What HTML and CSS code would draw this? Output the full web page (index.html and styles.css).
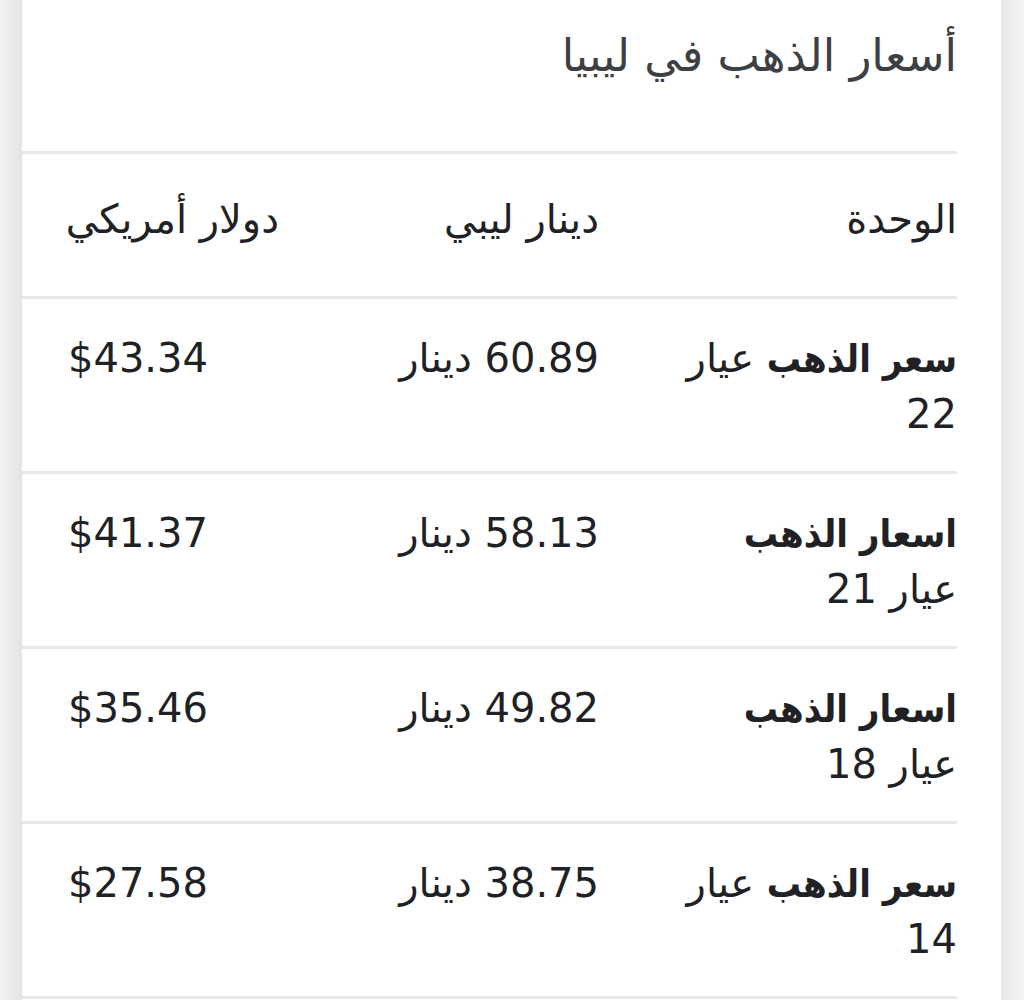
FILE: index.html
```html
<!DOCTYPE html>
<html lang="ar" dir="rtl">
<head>
<meta charset="utf-8">
<title>أسعار الذهب في ليبيا</title>
<link rel="stylesheet" href="styles.css">
</head>
<body>
<div class="page">
  <div class="card">
    <h1 class="title">أسعار الذهب في ليبيا</h1>
    <div class="table">
      <div class="row head">
        <div class="cell c1">الوحدة</div>
        <div class="cell c2">دينار ليبي</div>
        <div class="cell c3">دولار أمريكي</div>
      </div>
      <div class="row">
        <div class="cell c1"><b>سعر الذهب</b> عيار<br>22</div>
        <div class="cell c2">60.89 دينار</div>
        <div class="cell c3">$43.34</div>
      </div>
      <div class="row">
        <div class="cell c1"><b>اسعار الذهب</b><br>عيار 21</div>
        <div class="cell c2">58.13 دينار</div>
        <div class="cell c3">$41.37</div>
      </div>
      <div class="row">
        <div class="cell c1"><b>اسعار الذهب</b><br>عيار 18</div>
        <div class="cell c2">49.82 دينار</div>
        <div class="cell c3">$35.46</div>
      </div>
      <div class="row">
        <div class="cell c1"><b>سعر الذهب</b> عيار<br>14</div>
        <div class="cell c2">38.75 دينار</div>
        <div class="cell c3">$27.58</div>
      </div>
    </div>
  </div>
</div>
</body>
</html>
```
FILE: styles.css
```css
html, body {
  margin: 0;
  padding: 0;
  background: #f2f2f2;
}
body {
  font-family: "DejaVu Sans", sans-serif;
  color: #202124;
}
.page {
  display: flex;
  justify-content: center;
  height: 1000px;
  overflow: hidden;
  background: linear-gradient(to right, #f3f3f3 0, #e4e4e4 22px, #ffffff 22px, #ffffff 1001px, #e6e6e6 1001px, #f5f5f5 1024px);
}
.card {
  width: 979px;
  margin-left: 22px;
  margin-right: 23px;
  background: #fff;
  padding-right: 44px;
  box-sizing: border-box;
}
.title {
  margin: 0;
  height: 154px;
  padding-top: 28px;
  box-sizing: border-box;
  font-family: "DejaVu Sans", sans-serif;
  font-weight: normal;
  font-size: 45px;
  line-height: 56px;
  color: #3c4043;
  border-bottom: 3px solid #e8e8e8;
}
.row {
  display: grid;
  grid-template-columns: 358px 320px 1fr;
  border-bottom: 3px solid #e8e8e8;
  padding: 32px 0 29px;
  font-size: 40px;
  line-height: 55px;
}
.row.head {
  padding: 38px 0 49px;
}
.cell {
  text-align: right;
  white-space: nowrap;
}
.cell b {
  font-family: "DejaVu Sans Condensed", "DejaVu Sans", sans-serif;
  font-stretch: condensed;
  font-weight: bold;
  font-size: 38px;
}
.c3 {
  text-align: left;
  padding-left: 46px;
}
```
